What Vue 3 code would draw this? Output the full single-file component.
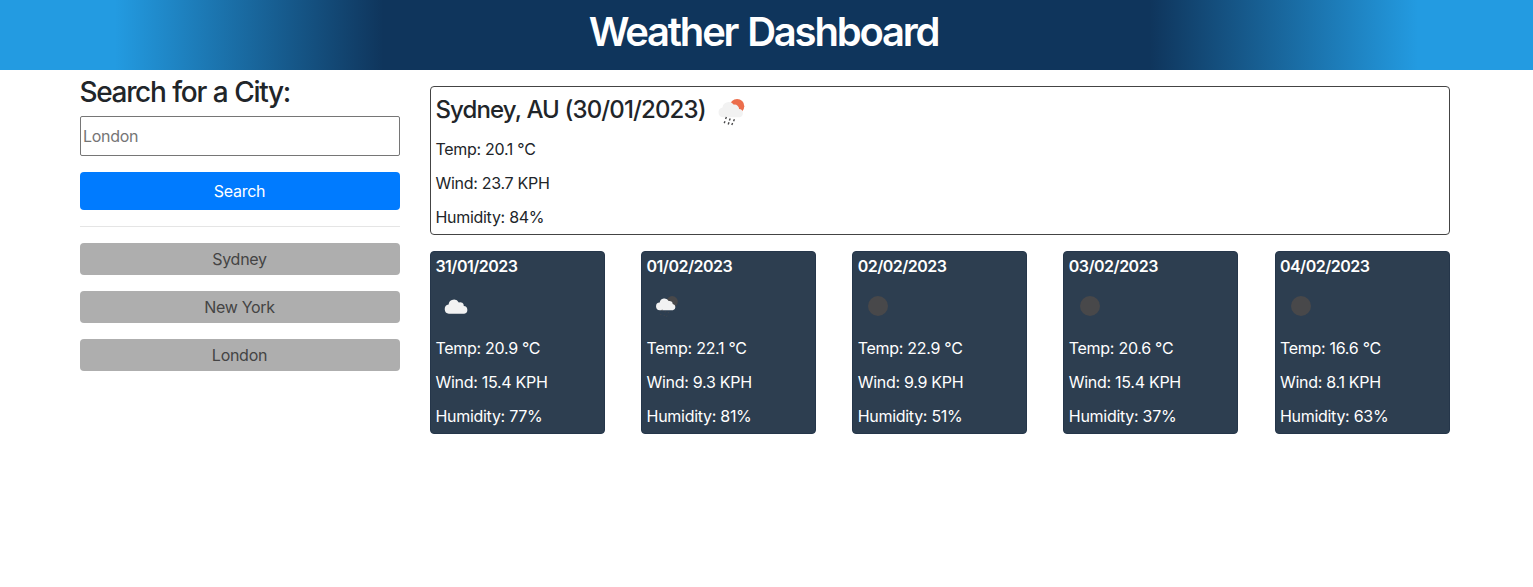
<script setup>
const cities = ['Sydney', 'New York', 'London']
const days = [
  { date: '31/01/2023', icon: 'cloud', temp: '20.9', wind: '15.4', humidity: 77 },
  { date: '01/02/2023', icon: 'rain', temp: '22.1', wind: '9.3', humidity: 81 },
  { date: '02/02/2023', icon: 'clear', temp: '22.9', wind: '9.9', humidity: 51 },
  { date: '03/02/2023', icon: 'clear', temp: '20.6', wind: '15.4', humidity: 37 },
  { date: '04/02/2023', icon: 'clear', temp: '16.6', wind: '8.1', humidity: 63 },
]
</script>

<template>
  <div class="page">
    <header class="banner"><h1>Weather Dashboard</h1></header>
    <div class="content">
      <aside class="sidebar">
        <h2>Search for a City:</h2>
        <input class="city-input" type="text" placeholder="London" />
        <button class="search">Search</button>
        <hr />
        <button v-for="city in cities" :key="city" class="city">{{ city }}</button>
      </aside>
      <main class="main">
        <section class="today">
          <div class="today-head">
            <h3>Sydney, AU (30/01/2023)</h3>
            <svg class="icon" viewBox="0 0 40 40">
              <circle cx="25.1" cy="14.2" r="7.2" fill="#ec6e4c" />
              <path fill="#f2f2f2" d="M11.2 25.2a4.9 4.9 0 0 1-.7-9.7 6.3 6.3 0 0 1 11.4-2.8 4.4 4.4 0 0 1 5.2 4.4 4.1 4.1 0 0 1 .5 8.1z" />
              <path stroke="#48484a" stroke-width="1.4" fill="none" d="M14.4 25l-.8 2M18.2 26.4l-.8 2M22.4 27.2l-.8 2M13 29.3l-.8 1.8M17 30.3l-.8 2.1M20.6 31l-.8 1.9" />
            </svg>
          </div>
          <p>Temp: 20.1 °C</p>
          <p>Wind: 23.7 KPH</p>
          <p>Humidity: 84%</p>
        </section>
        <div class="forecast">
          <article v-for="day in days" :key="day.date" class="card">
            <h4>{{ day.date }}</h4>
            <svg class="icon" viewBox="0 0 40 40">
              <path v-if="day.icon === 'cloud'" fill="#f2f2f2" d="M12.9 27.8a4.7 4.7 0 0 1-.3-9.3 5.4 5.4 0 0 1 10.2-2 3.6 3.6 0 0 1 5 3.5 3.95 3.95 0 0 1 .4 7.8z" />
              <template v-else-if="day.icon === 'rain'">
                <circle cx="25.2" cy="15.6" r="5.6" fill="#48484a" />
                <path fill="#f2f2f2" d="M13 24.2a3.8 3.8 0 0 1-.3-7.6 4.8 4.8 0 0 1 9-1.6 3.2 3.2 0 0 1 4 3 3.15 3.15 0 0 1 .2 6.2z" />
                <path stroke="#48484a" stroke-width="0.7" d="M15.2 23.6l-.4 1.4M18.4 25.3l-.4 1.2M21.6 26l-.4 1.2M14 28l-.4 1M17.4 29l-.4 1M20 29.7l-.4 1" />
              </template>
              <circle v-else cx="20" cy="20" r="10" fill="#48484a" />
            </svg>
            <p>Temp: {{ day.temp }} °C</p>
            <p>Wind: {{ day.wind }} KPH</p>
            <p>Humidity: {{ day.humidity }}%</p>
          </article>
        </div>
      </main>
    </div>
  </div>
</template>

<style>
body { margin: 0; background: #fff; }
</style>

<style scoped>
.page {
  font-family: Inter, Roboto, "Liberation Sans", sans-serif;
  font-size: 16px;
  line-height: 24px;
  letter-spacing: -0.28px;
  color: #212529;
}
.page * { box-sizing: border-box; }
h1, h2, h3, h4, p { margin: 0; }
.banner {
  height: 70px;
  padding: 7px 6px 0 0;
  text-align: center;
  color: #fff;
  background: linear-gradient(90deg, #239be1 7.5%, #0f355c 25%, #0f355c 75%, #239be1 92.5%);
}
h1 { font-size: 40px; line-height: 49px; font-weight: 600; letter-spacing: -2.2px; word-spacing: 2px; }
.content { display: flex; gap: 30px; padding: 0 83.5px 0 80px; }
.sidebar { width: 320px; display: flex; flex-direction: column; padding-top: 5px; }
h2 { font-size: 28px; line-height: 34px; font-weight: 550; letter-spacing: -1.35px; word-spacing: 0.8px; margin: 0 0 7px -0.5px; }
.city-input {
  height: 40px;
  padding: 1px 2px;
  border: 1px solid #767676;
  border-radius: 2px;
  font: inherit;
  letter-spacing: inherit;
}
.city-input::placeholder { color: #757575; }
button { border: 0; border-radius: 4px; padding: 0 1px 0 0; font: inherit; letter-spacing: inherit; }
.search { height: 38px; margin-top: 16px; background: #007bff; color: #fff; }
hr { width: 100%; height: 1px; border: 0; margin: 16px 0 0; background: #e5e5e5; }
.city { height: 32px; margin-top: 16px; background: #aeaeae; color: #444; }
.main { flex: 1; padding-top: 16px; }
.today { border: 1px solid #444; border-radius: 4px; padding: 5px 5px 5px 4.4px; }
.today-head { display: flex; height: 40px; }
h3 { font-size: 24px; line-height: 36px; font-weight: 550; letter-spacing: -0.87px; margin-right: 6px; }
.icon { display: block; width: 40px; height: 40px; }
.card .icon { margin-left: 0.8px; }
p { margin-top: 10px; white-space: nowrap; }
.today-head + p { margin-top: 5px; }
.forecast { display: flex; justify-content: space-between; margin-top: 16px; }
.card { width: 175px; height: 183px; padding: 5px 5px 5px 4.4px; border: 1px solid #25364a; border-radius: 4px; background: #2d3e50; color: #fff; }
h4 { font-size: 16px; line-height: 19px; font-weight: 600; letter-spacing: -0.5px; margin-bottom: 10px; }
</style>
